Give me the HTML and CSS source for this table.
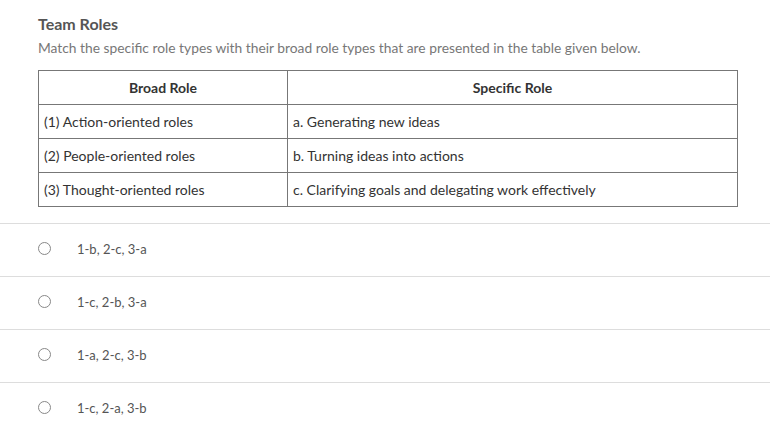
FILE: index.html
```html
<!DOCTYPE html>
<html>
<head>
<meta charset="utf-8">
<link rel="stylesheet" href="styles.css">
</head>
<body>
<div class="question">
  <h1 class="title">Team Roles</h1>
  <p class="prompt">Match the specific role types with their broad role types that are presented in the table given below.</p>
  <table class="roles">
    <thead>
      <tr><th>Broad Role</th><th>Specific Role</th></tr>
    </thead>
    <tbody>
      <tr><td>(1) Action-oriented roles</td><td>a. Generating new ideas</td></tr>
      <tr><td>(2) People-oriented roles</td><td>b. Turning ideas into actions</td></tr>
      <tr><td>(3) Thought-oriented roles</td><td>c. Clarifying goals and delegating work effectively</td></tr>
    </tbody>
  </table>
</div>
<ul class="options">
  <li class="option"><span class="radio"></span><span class="label">1-b, 2-c, 3-a</span></li>
  <li class="option"><span class="radio"></span><span class="label">1-c, 2-b, 3-a</span></li>
  <li class="option"><span class="radio"></span><span class="label">1-a, 2-c, 3-b</span></li>
  <li class="option"><span class="radio"></span><span class="label">1-c, 2-a, 3-b</span></li>
</ul>
</body>
</html>
```

FILE: styles.css
```css
html, body {
  margin: 0;
  padding: 0;
  background: #fff;
  font-family: Lato, "Open Sans", sans-serif;
}
.question {
  padding: 13px 32px 0 38px;
}
.title {
  margin: 0;
  font-size: 16px;
  font-weight: 700;
  color: #555;
  line-height: 22px;
}
.prompt {
  margin: 4px 0 0;
  font-size: 13.8px;
  color: #777;
  line-height: 18px;
}
.roles {
  margin-top: 13px;
  width: 700px;
  border-collapse: collapse;
  border: 1px solid #333;
  table-layout: fixed;
}
.roles th, .roles td {
  border: 1px solid #777;
  height: 34px;
  padding: 0 5px;
  font-size: 14px;
  color: #333;
  box-sizing: border-box;
}
.roles th {
  font-weight: 700;
  text-align: center;
}
.roles th:first-child, .roles td:first-child {
  width: 249px;
}
.options {
  list-style: none;
  margin: 16px 0 0;
  padding: 0;
  width: 770px;
}
.option {
  display: flex;
  align-items: center;
  height: 49px;
  padding-bottom: 3px;
  border-top: 1px solid #ddd;
  padding-left: 38px;
}
.radio {
  width: 11px;
  height: 11px;
  border: 1px solid #888;
  border-radius: 50%;
  margin-right: 26px;
}
.label {
  font-size: 13px;
  color: #555;
}
```
